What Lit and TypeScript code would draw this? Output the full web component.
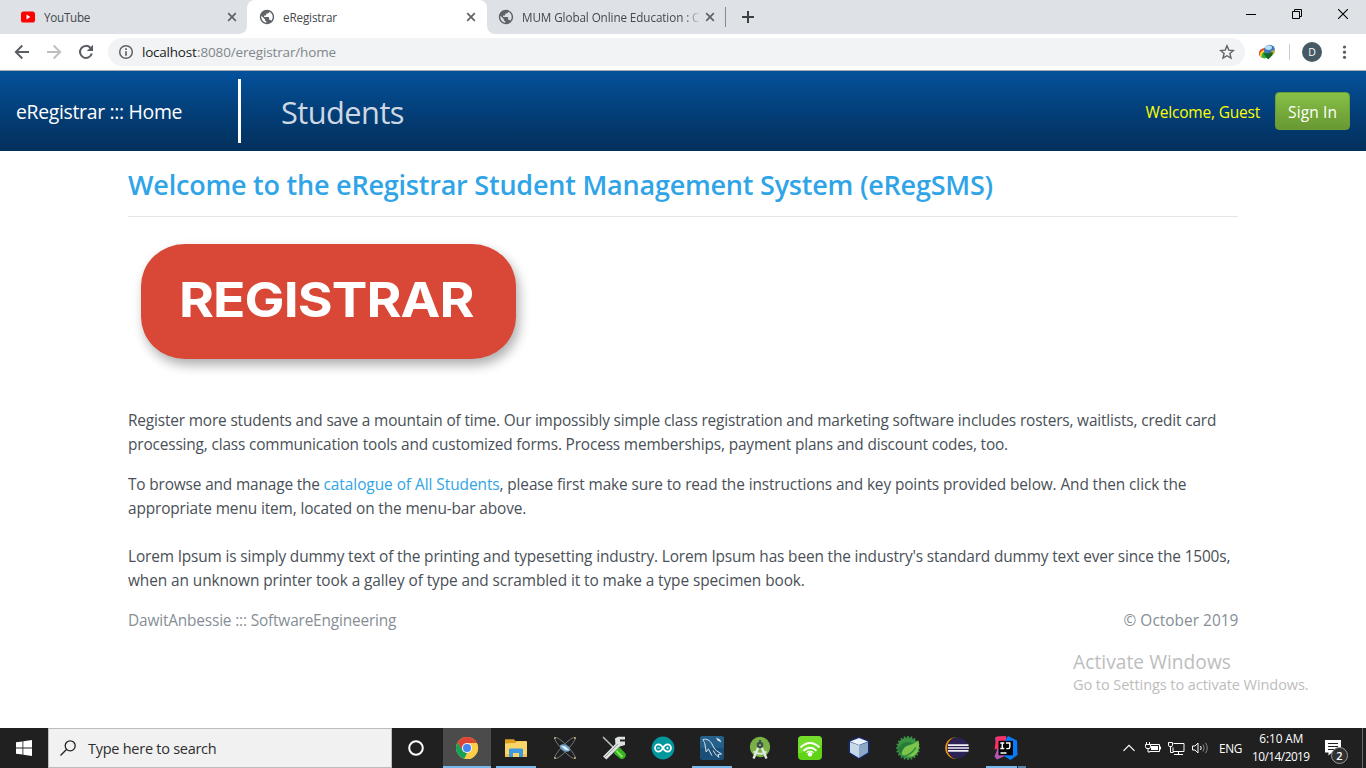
import { LitElement, html, css, svg } from "lit";
import { customElement, property } from "lit/decorators.js";

/** A single line of text whose tracking is adjusted so that it fills a given width. */
@customElement("fit-text")
class FitText extends LitElement {
  @property({ type: Number }) w = 0;
  static styles = css`
    :host { display: inline-block; white-space: pre; flex: none; }
    .box { display: block; }
    .run { display: inline-block; }
  `;
  firstUpdated() {
    const box = this.renderRoot.querySelector(".box") as HTMLElement;
    const run = this.renderRoot.querySelector(".run") as HTMLElement;
    const n = (this.textContent ?? "").length;
    const natural = run.offsetWidth;
    box.style.width = `${this.w}px`;
    if (n > 1) run.style.letterSpacing = `${(this.w - natural) / n}px`;
  }
  render() {
    return html`<span class="box"><span class="run"><slot></slot></span></span>`;
  }
}

const closeIcon = html`<svg class="x" width="10" height="10" viewBox="0 0 10 10"><path d="M1.2 1.2 8.8 8.8M8.8 1.2 1.2 8.8" stroke="#5f6368" stroke-width="1.7" fill="none"/></svg>`;

const globe = html`<svg width="16" height="16" viewBox="0.8 0.8 22.4 22.4">
  <path fill="#5f6368" d="M12 2C6.48 2 2 6.48 2 12s4.48 10 10 10 10-4.48 10-10S17.52 2 12 2zm-1 17.93c-3.95-.49-7-3.85-7-7.93 0-.62.08-1.21.21-1.79L9 15v1c0 1.1.9 2 2 2v1.93zm6.9-2.54c-.26-.81-1-1.39-1.9-1.39h-1v-3c0-.55-.45-1-1-1H8v-2h2c.55 0 1-.45 1-1V7h2c1.1 0 2-.9 2-2v-.41c2.93 1.19 5 4.06 5 7.41 0 2.08-.8 3.97-2.1 5.39z"/>
</svg>`;

const ic = (body: unknown) => html`<svg width="24" height="24" viewBox="0 0 24 24">${body}</svg>`;

const gear: string = Array.from({ length: 20 }, (_, i) => {
  const a = (i / 20) * Math.PI * 2;
  return `M12 12L${(12 + 12 * Math.cos(a)).toFixed(2)} ${(12 + 12 * Math.sin(a)).toFixed(2)}`;
}).join("");

const apps = [
  {
    state: "active",
    icon: svg`<circle cx="12" cy="12" r="11" fill="#fbc94a"/>
      <path d="M2.5 6.5A11 11 0 0 1 21.5 6.5L22 7H12L7 14.5Z" fill="#db4437"/>
      <path d="M2.5 6.5 7.6 14.4 12 17 9.3 22.7A11 11 0 0 1 2.5 6.5Z" fill="#16a05a"/>
      <path d="M12 7H21.8A11 11 0 0 1 9.3 22.7L16.3 14.5Z" fill="#fdcd48"/>
      <circle cx="12" cy="12" r="5.1" fill="#f4f4f4"/><circle cx="12" cy="12" r="4" fill="#4285f4"/>`,
  },
  {
    state: "open",
    icon: svg`<path d="M1 3.2h9l1.5 1.8H22V8H1Z" fill="#dc9f20"/><path d="M1 7.5 11 7l2-1.7h10V21H1Z" fill="#fcd568"/>
      <path d="M5 21v-7.2q0-1.3 1.3-1.3h11.4q1.3 0 1.3 1.3V21h-4v-4H9v4Z" fill="#3e9ae0"/><path d="M1 18.2h4V21H1Zm18 0h4V21h-4Z" fill="#f0bf48"/>`,
  },
  {
    state: "",
    icon: svg`<g fill="none" stroke="#7d8387" stroke-width=".8"><ellipse cx="12" cy="12" rx="14.5" ry="3" transform="rotate(46 12 12)"/><ellipse cx="12" cy="12" rx="14.5" ry="3" transform="rotate(-46 12 12)"/></g>
      <ellipse cx="12" cy="12" rx="5.5" ry="3.2" transform="rotate(25 12 12)" fill="#6c9dc4"/><path d="m7.5 9.5 5 1 4 4-4-.5Z" fill="#e5f4ff"/>
      <g fill="#c4a56c"><circle cx="2" cy="2" r="1.1"/><circle cx="22" cy="2" r="1.1"/><circle cx="2" cy="22" r="1.1"/><circle cx="22" cy="22" r="1.1"/></g>`,
  },
  {
    state: "",
    icon: svg`<path d="m1 1 12 12" stroke="#b9bec0" stroke-width="1.6"/><path d="m13.5 14 4-2.7 6 6.2q1 2.5-1 4.5t-4.5.5L12 17.5Z" fill="#37b51e"/><path d="m14.5 15 6 6" stroke="#8ae66c" stroke-width="1.8"/>
      <path d="M1 20.5 13.4 8 13 2.5 16 .8h7v2.6h-5v2.2h5V9l-5.3 1.6L4.4 23.4Z" fill="#dfe1e1"/><path d="M3 21 16 8" stroke="#969a9b"/>`,
  },
  {
    state: "",
    icon: svg`<circle cx="12" cy="12" r="11.4" fill="#00979d"/><path d="M12 12C10.5 9.3 9.3 8.4 7.6 8.4a3.6 3.6 0 0 0 0 7.2C9.3 15.6 10.5 14.7 12 12s2.7-3.6 4.4-3.6a3.6 3.6 0 0 1 0 7.2c-1.7 0-2.9-.9-4.4-3.6Z" fill="none" stroke="#fff" stroke-width="1.7"/><path d="M6.3 12h2.5M15.2 12h2.5M16.45 10.7v2.6" stroke="#fff" stroke-width="1"/>`,
  },
  {
    state: "open",
    icon: svg`<rect width="24" height="24" rx="2.5" fill="#1b4f77"/><rect width="24" height="12" rx="2.5" fill="#2d6c98" opacity=".6"/>
      <path d="M3 3.5C7 2.6 9.5 4.3 11.5 7.3c1.4 2 2.4 5.7 5 7.4L21.5 18l-3.4.4.8 3-4-3.8-1.6-3.1M3 3.5c.4 2 1.5 2.2 1.8 4.2L6.2 16l2.1-3.2 3.6 6.7" fill="none" stroke="#dbe7ef" stroke-width="1" stroke-linejoin="round"/><path d="m16 1.5 1.5 3 4 2-1.5-3Z" fill="#dbe7ef"/>`,
  },
  {
    state: "",
    icon: svg`<circle cx="11" cy="11" r="10.2" fill="#79b144"/>
      <path d="M9.5 11 4.5 22.5M12.5 11l5 11.5" stroke="#e4e8e4" stroke-width="2.4"/><path d="M4.5 15.5q6.5 4.5 13 0" fill="none" stroke="#e4e8e4" stroke-width="1.8"/><circle cx="11" cy="9" r="3.3" fill="#3e4f50"/><circle cx="11" cy="9" r="1.1" fill="#94b96f"/><path d="M10 4h2v3h-2Z" fill="#3e4f50"/>`,
  },
  {
    state: "",
    icon: svg`<rect width="24" height="24" rx="4" fill="#5fd315"/><path d="M0 4q0-4 4-4h16q4 0 4 4v5Q12 14 0 18Z" fill="#7fe238" opacity=".65"/>
      <g fill="none" stroke="#fff" stroke-width="2"><path d="M2.5 11.5q9.5-9 19 0"/><path d="M5.5 14.7q6.5-6 13 0"/></g><path d="M8.3 16.7q3.7-3 7.4 0" fill="none" stroke="#fff" stroke-width="1.3"/><circle cx="12" cy="18.2" r="2.3" fill="#fff"/>`,
  },
  {
    state: "",
    icon: svg`<path d="m12 .5 10.5 4.2V17L12 23.5 1.5 17V4.7Z" fill="#18276a"/><path d="m12 2 9 3.5L12 9 3 5.5Z" fill="#e9f3fa"/><path d="M3 6 12 9.2V22L3 16.6Z" fill="#c5d9e9"/><path d="M21 6l-9 3.2V22l9-5.4Z" fill="#8ba8c6"/>`,
  },
  {
    state: "",
    icon: svg`<circle cx="12" cy="12" r="10.6" fill="#3b9444"/><path d=${gear} stroke="#3b9444" stroke-width="1.7"/>
      <path d="M22.5 4.5Q25 19.5 14.5 20.5 8.5 21 6 18.2q-.8-6 4.5-8.2Q18.5 8 22.5 4.5Z" fill="#7cc64b"/><path d="M1.5 13Q8.5 2.5 17 7.5 8 8.5 5 18Z" fill="#257a38"/><path d="M5 20.5q9 0 15-9" fill="none" stroke="#318840" stroke-width="1.4"/>`,
  },
  {
    state: "",
    icon: svg`<circle cx="11" cy="12" r="10.8" fill="#ed8f20"/><circle cx="13" cy="12" r="11" fill="#202020"/><circle cx="13.2" cy="12" r="10.3" fill="#2c2255"/><path d="M3 9.2H23.5M2.7 12H24M3 14.8H23.5" stroke="#eef0f6" stroke-width="1.7"/>`,
  },
  {
    state: "stack",
    icon: svg`<path d="m1 1.5 7-1 5 5-1 14-9 4-2.5-3L3 14Z" fill="#b757b2"/><path d="M2.5.5 12 0l1 10L.5 13.5Z" fill="#fb3267"/><path d="m14 0 9 4.5.5 14.5-7 5L10 20V6Z" fill="#087cfa"/>
      <rect x="4.5" y="4.8" width="14.5" height="14.5" fill="#060606"/><path d="M6.3 7h4M8.3 7v5.5M6.3 12.5h4M12 7h3.8v4q0 1.6-1.6 1.6H12.3M6.5 17h6" fill="none" stroke="#fff" stroke-width="1.4"/>`,
  },
];

@customElement("app-root")
class AppRoot extends LitElement {
  static styles = css`
    :host { display: flex; flex-direction: column; position: relative; width: 1366px; height: 768px; overflow: hidden; background: #fff; font-family: "Open Sans", "Noto Sans", sans-serif; color: #495057; }
    * { box-sizing: border-box; }
    svg { display: block; flex: none; }

    .tabs { height: 34px; background: #dee1e6; display: flex; flex: none; }
    .tab { width: 239px; height: 34px; display: flex; align-items: center; font-size: 11.7px; line-height: 34px; color: #45494d; }
    .first { width: 247px; padding-left: 20px; background: #dee1e6; border-bottom-right-radius: 8px; }
    .active { width: 240px; background: #fff; border-radius: 8px 8px 0 0; padding-left: 12px; }
    .third { width: 238px; background: #dee1e6; padding-left: 11px; border-bottom-left-radius: 8px; }
    .underlay { background: linear-gradient(#dee1e6 50%, #fff 50%); display: flex; }
    .label { margin-left: 8px; margin-bottom: 1px; flex: 1; overflow: hidden; }
    .first .x { margin-right: 10px; }
    .active .x { margin-right: 11px; }
    .third .x { margin-right: 10px; margin-left: 5px; }
    .third .label { -webkit-mask-image: linear-gradient(90deg, #000 164px, transparent 178px); }
    .vsep { width: 1px; height: 20px; background: #85898e; margin: 7px 16px 0 0; }
    .plus { margin-top: 11px; }
    .win { margin-left: auto; display: flex; gap: 36px; padding: 9px 18px 0 0; }

    .bar { height: 36px; flex: none; display: flex; align-items: center; padding-left: 14px; }
    .nav { display: flex; gap: 16px; }
    .omni { margin-left: 14px; width: 1137px; height: 28px; border-radius: 14px; background: #f1f3f4; display: flex; align-items: center; padding: 0 10px; font-size: 13.5px; color: #80868b; }
    .omni .host { margin-left: 8px; color: #202124; }
    .omni .star { margin-left: auto; }
    .idm { margin-left: 13px; }
    .tsep { width: 1px; height: 16px; background: #ccc; margin: 0 12px 0 13px; }
    .avatar { width: 20px; height: 20px; border-radius: 50%; background: #455a64; color: #fff; font-size: 10.5px; line-height: 20px; text-align: center; }
    .dots { margin-left: 20px; }

    .head { height: 81px; flex: none; border-top: 1px solid #a9abae; background: linear-gradient(#04519b, #033c73 60%, #02305c); background-clip: padding-box; display: flex; align-items: center; padding: 0 16px; }
    .brand { font-size: 19.4px; line-height: 30px; padding-top: 1px; color: #fff; width: 222px; }
    .rule { width: 3px; height: 64px; background: #fff; margin-right: 40px; }
    .menu { font-size: 30.8px; line-height: 48px; padding-top: 1px; color: #cdd8e3; }
    .hello { margin-left: auto; padding-top: 1px; font-size: 15.5px; color: #ff0; }
    .signin { margin-left: 15px; padding-top: 1px; width: 75px; height: 38px; border: 1px solid #6c9d36; border-radius: 4px; background: linear-gradient(#88c149, #73a839 60%, #699934); color: #fff; font-size: 15.5px; display: flex; align-items: center; justify-content: center; }

    .page { flex: 1; padding: 16px 128px 0; font-size: 15.4px; line-height: 24px; }
    .title { margin: 0; font-size: 27px; font-weight: 600; line-height: 36px; color: #2fa4e7; }
    .line { height: 1px; background: #e5e5e5; margin: 13px 0 27px; width: 1110px; }
    .pill { margin-left: 13px; width: 375px; height: 115px; border-radius: 44px / 42px; background: #d94737; box-shadow: 3px 6px 12px rgba(0, 0, 0, .32); padding-left: 38px; font-family: Inter, sans-serif; font-weight: 700; font-size: 48.5px; line-height: 111px; color: #fff; }
    .pill-text { transform: scaleX(1.1); transform-origin: 0 50%; }
    .para { display: flex; flex-direction: column; margin-bottom: 16px; }
    .first-para { margin-top: 50px; }
    .wide { margin-bottom: 24px; }
    .row { display: flex; }
    .link { color: #2fa4e7; margin-left: 4px; }
    .foot { display: flex; justify-content: space-between; color: #868e96; width: 1110px; }

    .mark { position: absolute; left: 1073px; top: 648px; color: #bdbdbd; display: flex; flex-direction: column; }
    .mark .big { font-size: 19.2px; line-height: 28px; }
    .mark .small { font-size: 14.5px; line-height: 18px; }

    .task { height: 40px; flex: none; background: #202020; display: flex; color: #fff; }
    .start { width: 48px; display: flex; align-items: center; justify-content: center; }
    .search { width: 344px; background: #f1f1f1; border: 1px solid #bdbdbd; display: flex; align-items: center; padding-left: 11px; gap: 12px; font-size: 14.5px; color: #2e2e2e; }
    .cell { width: 48px; height: 40px; display: flex; align-items: center; justify-content: center; margin-right: 1px; }
    .cortana { margin-right: 3px; }
    .cell.active { background: linear-gradient(#76b9ed, #76b9ed) bottom / 48px 2px no-repeat #4b4b4b; width: 48px; border-radius: 0; padding: 0; }
    .cell.open { background: linear-gradient(#76b9ed, #76b9ed) 4px bottom / 40px 2px no-repeat; }
    .cell.stack { background: linear-gradient(90deg, #76b9ed 31px, #202020 31px 32px, #5585a8 32px) 4px bottom / 40px 2px no-repeat; }
    .tray { margin-left: auto; display: flex; align-items: center; font-size: 11.8px; }
    .clock { display: flex; flex-direction: column; align-items: center; width: 58px; margin-left: 10px; line-height: 18px; padding-bottom: 2px; }
    .note { margin-left: 14px; display: grid; width: 25px; height: 32px; }
    .note svg, .badge { grid-area: 1 / 1; }
    .badge { justify-self: end; align-self: end; width: 17px; height: 17px; margin-right: 1px; border: 1px solid #9a9a9a; border-radius: 50%; background: #303030; font-size: 11px; font-weight: 600; line-height: 15px; text-align: center; }
    .edge { width: 1px; height: 40px; background: #6b6b6b; margin: 0 3px 0 13px; }
  `;

  render() {
    return html`
      <div class="tabs">
        <div class="underlay"><div class="tab first">
          <svg width="16" height="16" viewBox="0 0 16 16"><rect x="1" y="2.5" width="14" height="11" rx="2.6" fill="#f00"/><path d="M6.5 5.6v4.8L10.4 8Z" fill="#fff"/></svg>
          <div class="label"><fit-text w="46">YouTube</fit-text></div>${closeIcon}
        </div></div>
        <div class="tab active">${globe}<div class="label"><fit-text w="53.5">eRegistrar</fit-text></div>${closeIcon}</div>
        <div class="underlay"><div class="tab third">${globe}<div class="label"><fit-text w="177">MUM Global Online Education : C</fit-text></div>${closeIcon}</div></div>
        <div class="vsep"></div>
        <svg class="plus" width="12" height="12" viewBox="0 0 12 12"><path d="M6 0v12M0 6h12" stroke="#3c4043" stroke-width="2"/></svg>
        <div class="win">
          <svg width="10" height="10" viewBox="0 0 10 10"><path d="M0 5.5h10" stroke="#000"/></svg>
          <svg width="10" height="10" viewBox="0 0 10 10"><path d="M.5 2.5h7v7h-7ZM2.5 2.5v-2h7v7h-2" fill="none" stroke="#000"/></svg>
          <svg width="10" height="10" viewBox="0 0 10 10"><path d="m0 0 10 10M10 0 0 10" stroke="#000" stroke-width="1.1"/></svg>
        </div>
      </div>

      <div class="bar">
        <div class="nav">
          <svg width="16" height="16" viewBox="0 0 16 16"><path d="M15 8H2M8.3 1.5 1.8 8l6.5 6.5" fill="none" stroke="#5a5e63" stroke-width="1.9"/></svg>
          <svg width="16" height="16" viewBox="0 0 16 16"><path d="M1 8h13M7.7 1.5 14.2 8l-6.5 6.5" fill="none" stroke="#bdbfc1" stroke-width="1.9"/></svg>
          <svg width="16" height="16" viewBox="0 0 16 16"><path d="M13.8 9.4A6 6 0 1 1 12.4 3.8" fill="none" stroke="#5a5e63" stroke-width="2"/><path d="M15 .8V7H8.8Z" fill="#5a5e63"/></svg>
        </div>
        <div class="omni">
          <svg width="16" height="16" viewBox="0 0 16 16"><circle cx="8" cy="8" r="6.3" fill="none" stroke="#5f6368" stroke-width="1.5"/><path d="M8 4.2v1.7M8 7.2v4.5" stroke="#5f6368" stroke-width="1.7"/></svg>
          <fit-text class="host" w="55">localhost</fit-text><fit-text w="139">:8080/eregistrar/home</fit-text>
          <svg class="star" width="16" height="16" viewBox="0 0 16 16"><path d="m8 1.8 1.8 4.3 4.6.4-3.5 3 1.1 4.6L8 11.7l-4 2.4 1.1-4.6-3.5-3 4.6-.4Z" fill="none" stroke="#5f6368" stroke-width="1.4"/></svg>
        </div>
        <svg class="idm" width="18" height="16" viewBox="0 0 18 16">
          <path d="M1 11Q0 5 7 4l3 9-6 1Z" fill="#e33b22"/><path d="M2 12Q1 7 7 5.5l3 7-5 2Z" fill="#ffd32c"/><path d="M3.5 13q0-5 5-6l2 6-4 1.5Z" fill="#25b142"/>
          <circle cx="11.5" cy="6.2" r="5.5" fill="#3b78bd"/><ellipse cx="10.5" cy="3.6" rx="3.5" ry="2.3" fill="#bcdcf4"/><path d="m13 7.5 4-2q0 4-3 6Z" fill="#d3b42d"/><path d="M5 9l4 .5 6-1.5-.8 3.5L10 15.5Z" fill="#17691f"/>
        </svg>
        <div class="tsep"></div>
        <div class="avatar">D</div>
        <svg class="dots" width="5" height="16" viewBox="0 0 5 16"><g fill="#5a5e63"><circle cx="2.5" cy="3" r="1.6"/><circle cx="2.5" cy="8.2" r="1.6"/><circle cx="2.5" cy="13.3" r="1.6"/></g></svg>
      </div>

      <div class="head">
        <div class="brand"><fit-text w="166">eRegistrar ::: Home</fit-text></div>
        <div class="rule"></div>
        <div class="menu"><fit-text w="122.5">Students</fit-text></div>
        <div class="hello"><fit-text w="114.5">Welcome, Guest</fit-text></div>
        <div class="signin"><fit-text w="49">Sign In</fit-text></div>
      </div>

      <div class="page">
        <h2 class="title"><fit-text w="864.5">Welcome to the eRegistrar Student Management System (eRegSMS)</fit-text></h2>
        <div class="line"></div>
        <div class="pill"><fit-text class="pill-text" w="267.5">REGISTRAR</fit-text></div>
        <div class="para first-para">
          <fit-text w="1088">Register more students and save a mountain of time. Our impossibly simple class registration and marketing software includes rosters, waitlists, credit card</fit-text>
          <fit-text w="880.5">processing, class communication tools and customized forms. Process memberships, payment plans and discount codes, too.</fit-text>
        </div>
        <div class="para wide">
          <div class="row"><fit-text w="191.5">To browse and manage the</fit-text><fit-text class="link" w="176">catalogue of All Students</fit-text><fit-text w="686.5">, please first make sure to read the instructions and key points provided below. And then click the</fit-text></div>
          <fit-text w="398.5">appropriate menu item, located on the menu-bar above.</fit-text>
        </div>
        <div class="para">
          <fit-text w="1102">Lorem Ipsum is simply dummy text of the printing and typesetting industry. Lorem Ipsum has been the industry's standard dummy text ever since the 1500s,</fit-text>
          <fit-text w="676.5">when an unknown printer took a galley of type and scrambled it to make a type specimen book.</fit-text>
        </div>
        <div class="foot"><fit-text w="268">DawitAnbessie ::: SoftwareEngineering</fit-text><fit-text w="114.5">© October 2019</fit-text></div>
      </div>

      <div class="task">
        <div class="start"><svg width="16" height="16" viewBox="0 0 16 16"><path d="M0 2.3 6.5 1.4V7.5H0ZM7.3 1.2 16 0V7.5H7.3ZM0 8.4H6.5V14.6L0 13.7ZM7.3 8.4H16V16L7.3 14.8Z" fill="#fff"/></svg></div>
        <div class="search">
          <svg width="16" height="16" viewBox="0 0 16 16"><circle cx="10.2" cy="5.8" r="5" fill="none" stroke="#222" stroke-width="1.3"/><path d="M6.7 9.3.5 15.5" stroke="#222" stroke-width="1.3"/></svg>
          <fit-text w="128">Type here to search</fit-text>
        </div>
        <div class="cell cortana">${ic(svg`<circle cx="12" cy="12" r="6.8" fill="none" stroke="#fff" stroke-width="2"/>`)}</div>
        ${apps.map((a) => html`<div class="cell ${a.state}">${ic(a.icon)}</div>`)}
        <div class="tray">
          <svg width="12" height="16" viewBox="0 0 12 16"><path d="M.5 10.8 6 5.3l5.5 5.5" fill="none" stroke="#fff" stroke-width="1.2"/></svg>
          <svg width="84" height="20" viewBox="0 0 84 20" fill="none" stroke="#fff">
            <path d="M15.5 6.5h9v7h-10"/><path d="M16 8h7v4h-7Z" fill="#fff" stroke="none"/><path d="M25.5 8.5v3"/><path d="M11.5 4v3M14.5 4v3M10.5 6.5h5v2q0 2-1.5 2h-2q-1.5 0-1.5-2ZM13 10.5v3.5h2"/>
            <path d="M38.5 5.5h10.5v8h-11v-4M43.5 13.5v3M39 16.5h9"/><path d="M33.5 4.5v3q0 1 1.5 1h1q1.5 0 1.5-1v-3ZM35.5 8.5v6h3"/>
            <path d="M57.5 8h2.5l3-3v10l-3-3h-2.5Z"/><path d="M65.5 8q1.5 2 0 4"/><path d="M68 6.5q2.5 3.5 0 7M70.5 4.8q3.5 5.2 0 10.4" stroke="#898989"/>
          </svg>
          <fit-text w="23">ENG</fit-text>
          <div class="clock"><fit-text w="43.5">6:10 AM</fit-text><fit-text w="58">10/14/2019</fit-text></div>
          <div class="note">
            <svg width="18" height="26" viewBox="0 0 18 26"><path d="M1 8h16v12.5H8l-3.5 3v-3H1Z" fill="#fff"/><path d="M4 11.5h10M4 14.5h10M4 17.5h7" stroke="#222"/></svg>
            <div class="badge">2</div>
          </div>
          <div class="edge"></div>
        </div>
      </div>

      <div class="mark"><fit-text class="big" w="157.5">Activate Windows</fit-text><fit-text class="small" w="236">Go to Settings to activate Windows.</fit-text></div>
    `;
  }
}
